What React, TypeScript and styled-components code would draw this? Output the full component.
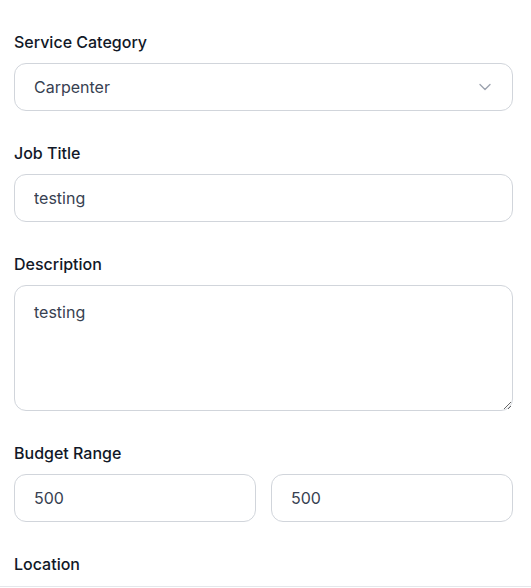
import React, { useState } from 'react';
import styled, { createGlobalStyle } from 'styled-components';
import { ChevronDown } from 'lucide-react';

const ink    = '#111827';
const text   = '#374151';
const border = '#d1d5db';
const muted  = '#9ca3af';

const GlobalStyle = createGlobalStyle`
    html, body { margin: 0; padding: 0; background: #fff; }
    body { font-family: Inter, "Noto Sans", sans-serif; color: ${ink}; }
    * { box-sizing: border-box; }
`;

// ── Layout ────────────────────────────────────────────────────────────────────

const Form = styled.form`
    display: flex;
    flex-direction: column;
    gap: 30px;
    padding: 30px 18px 0 14px;
`;

const Field = styled.div`
    display: flex;
    flex-direction: column;
`;

const Label = styled.label`
    font-size: 16px;
    line-height: 24px;
    font-weight: 500;
    color: ${ink};
    margin-bottom: 9px;
`;

const Row = styled.div`
    display: grid;
    grid-template-columns: 1fr 1fr;
    gap: 15px;
`;

// ── Controls ──────────────────────────────────────────────────────────────────

const controlBase = `
    width: 100%;
    border: 1px solid ${border};
    border-radius: 12px;
    background: #fff;
    font-family: Inter, "Noto Sans", sans-serif;
    font-size: 16px;
    color: ${text};
    outline: none;
    padding: 0 19px;
`;

const Input = styled.input`
    ${controlBase}
    height: 48px;
`;

const SelectWrap = styled.div`
    position: relative;
`;

const Select = styled.select`
    ${controlBase}
    height: 48px;
    appearance: none;
    -webkit-appearance: none;
`;

const Chevron = styled(ChevronDown)`
    position: absolute;
    right: 18px;
    top: 50%;
    transform: translateY(-50%);
    color: ${muted};
    pointer-events: none;
`;

const TextArea = styled.textarea`
    ${controlBase}
    height: 126px;
    padding-top: 14px;
    line-height: 24px;
    resize: vertical;
`;

const Footer = styled.div`
    margin-top: 1px;
    height: 20px;
    border-top: 1px solid #e5e7eb;
    margin-left: -14px;
    margin-right: -18px;
`;

// ── Component ─────────────────────────────────────────────────────────────────

export default function App() {
    const [category, setCategory] = useState('carpenter');
    const [title, setTitle] = useState('testing');
    const [description, setDescription] = useState('testing');
    const [min, setMin] = useState('500');
    const [max, setMax] = useState('500');

    return (
        <>
            <GlobalStyle />
            <Form onSubmit={e => e.preventDefault()}>
                <Field>
                    <Label htmlFor="category">Service Category</Label>
                    <SelectWrap>
                        <Select id="category" value={category} onChange={e => setCategory(e.target.value)}>
                            <option value="carpenter">Carpenter</option>
                            <option value="plumber">Plumber</option>
                            <option value="electrician">Electrician</option>
                        </Select>
                        <Chevron size={20} strokeWidth={1.6} />
                    </SelectWrap>
                </Field>

                <Field>
                    <Label htmlFor="title">Job Title</Label>
                    <Input id="title" value={title} onChange={e => setTitle(e.target.value)} />
                </Field>

                <Field>
                    <Label htmlFor="description">Description</Label>
                    <TextArea id="description" value={description} onChange={e => setDescription(e.target.value)} />
                </Field>

                <Field>
                    <Label>Budget Range</Label>
                    <Row>
                        <Input type="number" value={min} onChange={e => setMin(e.target.value)} />
                        <Input type="number" value={max} onChange={e => setMax(e.target.value)} />
                    </Row>
                </Field>

                <Field>
                    <Label>Location</Label>
                    <Footer />
                </Field>
            </Form>
        </>
    );
}
